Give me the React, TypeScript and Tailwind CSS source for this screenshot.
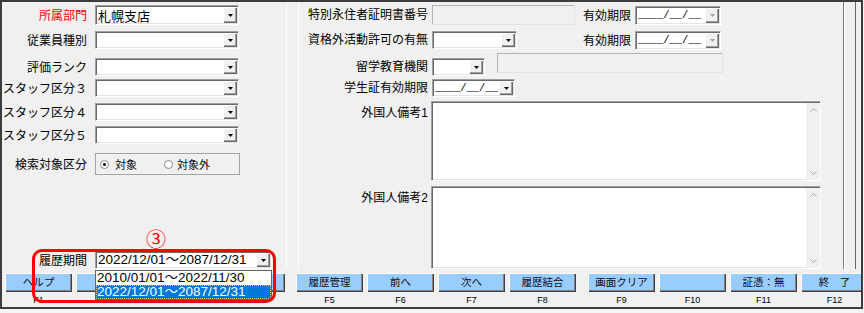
import React from "react";

const sunken =
  "border border-t-[#a0a0a0] border-l-[#a0a0a0] border-r-white border-b-white shadow-[inset_1px_1px_0_#696969,inset_-1px_-1px_0_#e3e3e3]";

function Tri({ gray }: { gray?: boolean }) {
  return (
    <svg width="5" height="3" viewBox="0 0 5 3">
      <path d="M0 0H5L2.5 3Z" fill={gray ? "#a0a0a0" : "#000"} />
    </svg>
  );
}

function DropBtn({ gray }: { gray?: boolean }) {
  return (
    <div className="w-[14px] shrink-0 h-full bg-[#f0f0f0] flex items-center justify-center shadow-[inset_1px_1px_0_#fff,inset_-1px_-1px_0_#696969,inset_-2px_-2px_0_#a0a0a0]">
      <Tri gray={gray} />
    </div>
  );
}

function Combo({
  className,
  text,
  textClass,
  gray,
}: {
  className: string;
  text?: string;
  textClass?: string;
  gray?: boolean;
}) {
  return (
    <div className={`${sunken} bg-white flex p-[1px] shrink-0 ${className}`}>
      <div
        className={`flex-1 min-w-0 flex items-center pl-[1px] overflow-hidden whitespace-nowrap ${textClass ?? ""}`}
      >
        {text}
      </div>
      <DropBtn gray={gray} />
    </div>
  );
}

function DateBox({ className, gray }: { className: string; gray?: boolean }) {
  return (
    <Combo
      className={className}
      gray={gray}
      text="____/__/__"
      textClass="text-[10.5px] leading-none font-['Liberation_Mono',monospace]"
    />
  );
}

function Disabled({ className }: { className: string }) {
  return (
    <div
      className={`shrink-0 bg-[#f0f0f0] border border-t-[#b4b4b4] border-l-[#b4b4b4] border-r-[#e3e3e3] border-b-[#e3e3e3] ${className}`}
    />
  );
}

function LLabel({ children, red }: { children: React.ReactNode; red?: boolean }) {
  return (
    <div
      className={`w-[85px] shrink-0 text-right whitespace-nowrap text-[12px] leading-[14px] ${red ? "text-[#ff0000]" : "text-black"}`}
    >
      {children}
    </div>
  );
}

function RLabel({ children }: { children: React.ReactNode }) {
  return (
    <div className="w-[129px] shrink-0 text-right whitespace-nowrap text-[12px] leading-[14px] font-['Liberation_Sans','Noto_Sans_CJK_JP',sans-serif]">
      {children}
    </div>
  );
}

function Chevron({ up }: { up?: boolean }) {
  return (
    <svg width="7" height="4" viewBox="0 0 7 4">
      <polyline
        points={up ? "0.5,3.5 3.5,0.5 6.5,3.5" : "0.5,0.5 3.5,3.5 6.5,0.5"}
        fill="none"
        stroke="#a8a8a8"
      />
    </svg>
  );
}

function Memo({ className }: { className: string }) {
  return (
    <div className={`${sunken} bg-white flex justify-end pt-[1px] pl-[1px] shrink-0 ${className}`}>
      <div className="w-[14px] h-full bg-[#f0f0f0] flex flex-col items-center justify-between pt-[5px] pb-[5px]">
        <Chevron up />
        <Chevron />
      </div>
    </div>
  );
}

function FKey({ label, k, className }: { label: string; k: string; className?: string }) {
  return (
    <div className={`w-[67px] shrink-0 flex flex-col items-center ${className ?? ""}`}>
      <div className="w-full h-[19px] bg-[#99ccff] flex items-center justify-center text-[10.5px] leading-none text-[#101020] whitespace-pre shadow-[inset_1px_1px_0_#fff,inset_-1px_-1px_0_#404040,inset_-2px_-2px_0_#808080]">
        {label}
      </div>
      <div className="mt-[2px] text-[9px] leading-[12px] font-['Liberation_Sans',sans-serif]">{k}</div>
    </div>
  );
}

export default function App() {
  return (
    <div className="relative w-[864px] h-[313px] bg-[#f4f4f4] overflow-hidden text-black font-['Noto_Sans_CJK_JP',sans-serif]">
      <div className="w-[863px] h-[309px] border-2 border-[#3c3c3c] bg-[#f0f0f0] flex flex-col overflow-hidden">
        {/* main area */}
        <div className="h-[267px] flex shrink-0">
          {/* left column */}
          <div className="w-[284px] shrink-0 flex flex-col">
            <div className="mt-[3px] flex items-center">
              <LLabel red>所属部門</LLabel>
              <Combo className="ml-[8px] w-[144px] h-[20px]" text="札幌支店" textClass="text-[13px] leading-none" />
            </div>
            <div className="mt-[6px] flex items-center">
              <LLabel>従業員種別</LLabel>
              <Combo className="ml-[8px] w-[144px] h-[18px]" />
            </div>
            <div className="mt-[9px] flex items-center">
              <LLabel>評価ランク</LLabel>
              <Combo className="ml-[8px] w-[144px] h-[18px]" />
            </div>
            <div className="mt-[3px] flex items-center">
              <LLabel>スタッフ区分３</LLabel>
              <Combo className="ml-[8px] w-[144px] h-[18px]" />
            </div>
            <div className="mt-[6px] flex items-center">
              <LLabel>スタッフ区分４</LLabel>
              <Combo className="ml-[8px] w-[144px] h-[18px]" />
            </div>
            <div className="mt-[5px] flex items-center">
              <LLabel>スタッフ区分５</LLabel>
              <Combo className="ml-[8px] w-[144px] h-[18px]" />
            </div>
            <div className="mt-[9px] flex items-center">
              <LLabel>検索対象区分</LLabel>
              <div className="ml-[8px] w-[145px] h-[22px] border border-[#a5a5a5] flex items-center text-[11px] leading-none">
                <span className="ml-[4px] w-[9px] h-[9px] rounded-full border border-[#8a8a8a] bg-white flex items-center justify-center">
                  <span className="w-[3px] h-[3px] rounded-full bg-black" />
                </span>
                <span className="ml-[6px]">対象</span>
                <span className="ml-[27px] w-[9px] h-[9px] rounded-full border border-[#8a8a8a] bg-white" />
                <span className="ml-[4px]">対象外</span>
              </div>
            </div>
            <div className="mt-auto flex items-center">
              <LLabel>履歴期間</LLabel>
              <Combo
                className="ml-[8px] w-[177px] h-[18px]"
                text="2022/12/01～2087/12/31"
                textClass="text-[13.5px] leading-none font-['Liberation_Sans','Noto_Sans_CJK_JP',sans-serif]"
              />
            </div>
          </div>

          <div className="w-[1px] bg-white shrink-0" />
          <div className="w-[11px] shrink-0" />
          <div className="w-[1px] bg-white shrink-0" />

          {/* right column */}
          <div className="w-[544px] shrink-0 flex flex-col">
            <div className="mt-[3px] h-[20px] flex items-center">
              <RLabel>特別永住者証明書番号</RLabel>
              <Disabled className="ml-[4px] w-[143px] h-[20px]" />
              <span className="ml-[8px] text-[12px] leading-[14px]">有効期限</span>
              <DateBox className="ml-[4px] w-[86px] h-[19px]" gray />
            </div>
            <div className="mt-[6px] h-[18px] flex items-center">
              <RLabel>資格外活動許可の有無</RLabel>
              <Combo className="ml-[4px] w-[85px] h-[18px]" />
              <span className="ml-[66px] text-[12px] leading-[14px]">有効期限</span>
              <DateBox className="ml-[4px] w-[86px] h-[19px]" gray />
            </div>
            <div className="mt-[4px] flex items-start">
              <div className="mt-[7px]">
                <RLabel>留学教育機関</RLabel>
              </div>
              <Combo className="ml-[4px] mt-[5px] w-[53px] h-[18px]" />
              <Disabled className="ml-[12px] w-[226px] h-[20px]" />
            </div>
            <div className="mt-[3px] h-[18px] flex items-center">
              <RLabel>学生証有効期限</RLabel>
              <DateBox className="ml-[4px] w-[83px] h-[18px]" />
            </div>
            <div className="mt-[4px] flex items-start">
              <div className="mt-[5px]">
                <RLabel>外国人備考1</RLabel>
              </div>
              <Memo className="ml-[3px] w-[390px] h-[80px]" />
            </div>
            <div className="mt-[5px] flex items-start">
              <div className="mt-[5px]">
                <RLabel>外国人備考2</RLabel>
              </div>
              <Memo className="ml-[3px] w-[390px] h-[83px]" />
            </div>
          </div>

          <div className="w-[1px] bg-[#808080] shrink-0" />
          <div className="w-[1px] bg-white shrink-0" />
          <div className="w-[10px] shrink-0" />
          <div className="w-[1px] bg-[#696969] shrink-0" />
          <div className="w-[5px] shrink-0" />
        </div>

        {/* function keys */}
        <div className="h-[38px] flex pl-[3px] pt-[4px] shrink-0">
          <div className="flex gap-[4px]">
            <FKey label="ヘルプ" k="F1" />
            <FKey label="" k="F2" />
            <FKey label="" k="F3" />
            <FKey label="" k="F4" />
          </div>
          <div className="ml-[11px] flex gap-[4px]">
            <FKey label="履歴管理" k="F5" />
            <FKey label="前へ" k="F6" />
            <FKey label="次へ" k="F7" />
            <FKey label="履歴結合" k="F8" />
          </div>
          <div className="ml-[12px] flex gap-[4px]">
            <FKey label="画面クリア" k="F9" />
            <FKey label="" k="F10" />
            <FKey label="証憑：無" k="F11" />
            <FKey label="終　了" k="F12" />
          </div>
        </div>
      </div>

      {/* open dropdown list */}
      <div className="absolute left-[95px] top-[270px] w-[177px] h-[30px] bg-white border border-[#646464] flex flex-col text-[13.5px] leading-[14px] font-['Liberation_Sans','Noto_Sans_CJK_JP',sans-serif]">
        <div className="h-[14px] pl-[1px] whitespace-nowrap">2010/01/01～2022/11/30</div>
        <div className="h-[14px] pl-[1px] whitespace-nowrap bg-[#0078d7] text-white outline-1 outline-dotted outline-[#e0c080] -outline-offset-1">
          2022/12/01～2087/12/31
        </div>
      </div>

      {/* annotation */}
      <div className="absolute left-[32px] top-[249px] w-[244px] h-[54px] border-[3px] border-[#ff0000] rounded-[10px]" />
      <div className="absolute left-[146px] top-[228px] text-[20px] leading-[22px] text-[#ff0000]">③</div>
    </div>
  );
}
